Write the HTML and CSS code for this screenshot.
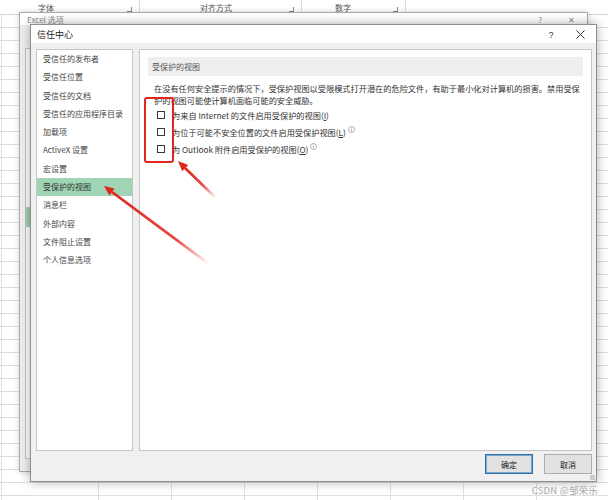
FILE: index.html
```html
<!DOCTYPE html>
<html lang="zh-CN">
<head>
<meta charset="utf-8">
<title>信任中心</title>
<link rel="stylesheet" href="styles.css">
</head>
<body>
<div class="sheet">
  <div class="ribbon">
    <div class="group g1"><span class="glabel">字体</span><i class="launch"></i></div>
    <div class="group g2"><span class="glabel">对齐方式</span><i class="launch"></i></div>
    <div class="group g3"><span class="glabel">数字</span><i class="launch"></i></div>
  </div>
</div>

<div class="dlg-back">
  <div class="back-title">
    <span>Excel 选项</span>
    <span class="back-help">?</span>
    <span class="back-close">✕</span>
  </div>
  <div class="back-body">
    <div class="back-nav"><div class="back-sel"></div></div>
  </div>
</div>

<div class="dlg">
  <div class="titlebar">
    <span class="title">信任中心</span>
    <span class="tb-btn help">?</span>
    <span class="tb-btn close">
      <svg width="9" height="9" viewBox="0 0 9 9"><path d="M0.5 0.5L8.5 8.5M8.5 0.5L0.5 8.5" stroke="#333" stroke-width="1" fill="none"/></svg>
    </span>
  </div>
  <div class="dbody">
    <ul class="nav">
      <li>受信任的发布者</li>
      <li>受信任位置</li>
      <li>受信任的文档</li>
      <li>受信任的应用程序目录</li>
      <li>加载项</li>
      <li>ActiveX 设置</li>
      <li>宏设置</li>
      <li class="sel">受保护的视图</li>
      <li>消息栏</li>
      <li>外部内容</li>
      <li>文件阻止设置</li>
      <li>个人信息选项</li>
    </ul>
    <div class="content">
      <div class="sec-head">受保护的视图</div>
      <p class="desc">在没有任何安全提示的情况下，受保护视图以受限模式打开潜在的危险文件，有助于最小化对计算机的损害。禁用受保护的视图可能使计算机面临可能的安全威胁。</p>
      <div class="opts">
        <label class="opt"><span class="cb"></span><span class="olabel">为来自 Internet 的文件启用受保护的视图(<u>I</u>)</span></label>
        <label class="opt"><span class="cb"></span><span class="olabel">为位于可能不安全位置的文件启用受保护视图(<u>L</u>)</span><svg class="info" width="7" height="7" viewBox="0 0 7 7"><circle cx="3.5" cy="3.5" r="3" stroke="#9a9a9a" stroke-width="0.8" fill="none"/><path d="M3.5 3v2.3M3.5 1.7v0.6" stroke="#9a9a9a" stroke-width="0.8"/></svg></label>
        <label class="opt"><span class="cb"></span><span class="olabel">为 Outlook 附件启用受保护的视图(<u>O</u>)</span><svg class="info" width="7" height="7" viewBox="0 0 7 7"><circle cx="3.5" cy="3.5" r="3" stroke="#9a9a9a" stroke-width="0.8" fill="none"/><path d="M3.5 3v2.3M3.5 1.7v0.6" stroke="#9a9a9a" stroke-width="0.8"/></svg></label>
      </div>
    </div>
  </div>
  <div class="footer">
    <button class="btn primary">确定</button>
    <button class="btn">取消</button>
  </div>
  <i class="grip"></i>
</div>

<svg class="annot" width="608" height="500" viewBox="0 0 608 500">
  <defs>
    <linearGradient id="ga" gradientUnits="userSpaceOnUse" x1="216" y1="198" x2="185" y2="168">
      <stop offset="0" stop-color="#e3261d" stop-opacity="0"/>
      <stop offset="0.45" stop-color="#e3261d" stop-opacity="0.85"/>
      <stop offset="1" stop-color="#e3261d"/>
    </linearGradient>
    <linearGradient id="gb" gradientUnits="userSpaceOnUse" x1="209" y1="264" x2="112" y2="192">
      <stop offset="0" stop-color="#e3261d" stop-opacity="0"/>
      <stop offset="0.35" stop-color="#e3261d" stop-opacity="0.85"/>
      <stop offset="1" stop-color="#e3261d"/>
    </linearGradient>
  </defs>
  <rect x="145" y="98" width="28" height="64" rx="2" fill="none" stroke="#e3261d" stroke-width="2"/>
  <line x1="216" y1="198" x2="185" y2="168" stroke="url(#ga)" stroke-width="2.6"/>
  <polygon points="178,161 188.2,165 182.2,171.2" fill="#e3261d"/>
  <line x1="209" y1="264" x2="112" y2="192" stroke="url(#gb)" stroke-width="2.8"/>
  <polygon points="104,186 114.6,188.5 109.4,195.5" fill="#e3261d"/>
</svg>

<div class="watermark">CSDN @邹荣乐</div>
</body>
</html>
```

FILE: styles.css
```css
html, body {
  margin: 0;
  padding: 0;
}
body {
  width: 608px;
  height: 500px;
  overflow: hidden;
  position: relative;
  font-family: "Noto Sans CJK SC", "Noto Sans", sans-serif;
  background: #fff;
}

/* spreadsheet behind the dialogs */
.sheet {
  width: 608px;
  height: 500px;
  background-color: #fff;
  background-image:
    repeating-linear-gradient(to bottom, transparent 0 12px, #dedede 12px 13px),
    repeating-linear-gradient(to right, transparent 0 72px, #dedede 72px 73px);
  background-position: 0 15px, 26px 0;
}
.ribbon {
  height: 14px;
  display: flex;
  background: #fff;
  border-bottom: 1px solid #d4d4d4;
  font-size: 8px;
  color: #555;
}
.group {
  display: flex;
  align-items: center;
  border-right: 1px solid #dadada;
  box-sizing: border-box;
  height: 14px;
}
.g1 { width: 140px; padding-left: 38px; }
.g2 { width: 162px; padding-left: 60px; }
.g3 { width: 104px; padding-left: 33px; }
.glabel { line-height: 14px; margin-top: 1px; }
.launch {
  margin-left: auto;
  margin-right: 7px;
  width: 4px;
  height: 4px;
  border-right: 1px solid #888;
  border-bottom: 1px solid #888;
  margin-top: 4px;
}

/* background dialog: Excel 选项 */
.dlg-back {
  position: absolute;
  left: 19px;
  top: 12px;
  width: 569px;
  height: 460px;
  box-sizing: border-box;
  background: #f0f0f0;
  border: 1px solid #a9a9a9;
  box-shadow: 0 0 6px rgba(0, 0, 0, 0.18);
}
.back-title {
  height: 12px;
  background: #fff;
  display: flex;
  align-items: center;
  padding-left: 7px;
  font-size: 8px;
  color: #8a8a8a;
}
.back-help { margin-left: auto; margin-right: 26px; }
.back-close { margin-right: 12px; font-size: 8px; }
.back-body { padding: 23px 0 0 5px; }
.back-nav {
  width: 100px;
  height: 411px;
  box-sizing: border-box;
  background: #fff;
  border: 1px solid #c4c4c4;
  padding-top: 158px;
}
.back-sel { height: 20px; background: #9fd4b4; }

/* main dialog: 信任中心 */
.dlg {
  position: absolute;
  left: 30px;
  top: 24px;
  width: 567px;
  height: 458px;
  box-sizing: border-box;
  background: #f0f0f0;
  border: 1px solid #8e8e8e;
  box-shadow: 0 0 10px rgba(0, 0, 0, 0.32);
  display: flex;
  flex-direction: column;
}
.titlebar {
  height: 18px;
  flex: none;
  background: #fff;
  display: flex;
  align-items: center;
  padding-left: 6px;
  padding-right: 8px;
  gap: 13px;
}
.title {
  font-size: 9px;
  color: #222;
  margin-top: 1px;
}
.tb-btn {
  width: 16px;
  display: flex;
  justify-content: center;
  align-items: center;
  color: #333;
  font-size: 9px;
  font-family: "Liberation Sans", sans-serif;
  margin-top: 1px;
}
.help { margin-left: auto; }

.dbody {
  display: flex;
  gap: 6px;
  padding: 6px 4px 0 5px;
  flex: none;
}
.nav {
  list-style: none;
  margin: 0;
  padding: 0;
  width: 97px;
  height: 402px;
  box-sizing: border-box;
  background: #fff;
  border: 1px solid #c6c6c6;
}
.nav li {
  height: 18.3px;
  line-height: 18.3px;
  padding-left: 6px;
  font-size: 8px;
  color: #444;
  white-space: nowrap;
}
.nav li.sel {
  background: #9fd4b4;
  color: #333;
}

.content {
  width: 453px;
  height: 402px;
  box-sizing: border-box;
  background: #fff;
  border: 1px solid #c6c6c6;
  padding: 7px 8px 0 8px;
}
.sec-head {
  height: 19px;
  line-height: 19px;
  background: #efefef;
  padding-left: 4px;
  font-size: 8px;
  color: #555;
}
.desc {
  margin: 6px 0 0 6px;
  font-size: 8.2px;
  line-height: 12px;
  color: #333;
}
.opts {
  margin: 0.5px 0 0 9px;
  display: flex;
  flex-direction: column;
}
.opt {
  height: 17px;
  display: flex;
  align-items: center;
  font-size: 8.2px;
  color: #333;
  white-space: nowrap;
}
.cb {
  width: 8px;
  height: 8px;
  box-sizing: border-box;
  border: 1px solid #3a3a3a;
  background: #fff;
  margin-right: 7px;
  flex: none;
}
.info {
  margin-left: 2px;
  margin-top: -5px;
}

.footer {
  display: flex;
  justify-content: flex-end;
  gap: 11px;
  padding: 3px 4px 0 0;
}
.btn {
  width: 48px;
  height: 20px;
  box-sizing: border-box;
  margin: 0;
  padding: 0;
  background: #e1e1e1;
  border: 1px solid #adadad;
  font-family: "Noto Sans CJK SC", sans-serif;
  font-size: 8px;
  color: #222;
}
.btn.primary {
  border: 1px solid #2f6ea5;
  box-shadow: inset 0 0 0 1px #79a9d3;
}
.grip {
  position: absolute;
  right: 1px;
  bottom: 1px;
  width: 5px;
  height: 5px;
  background-image: radial-gradient(circle, #a0a0a0 0.6px, transparent 0.8px);
  background-size: 2px 2px;
}

.annot {
  position: absolute;
  left: 0;
  top: 0;
  pointer-events: none;
}
.watermark {
  position: absolute;
  right: 10px;
  top: 483px;
  font-size: 9.5px;
  color: #a8a8a8;
  letter-spacing: 0.2px;
}
```
